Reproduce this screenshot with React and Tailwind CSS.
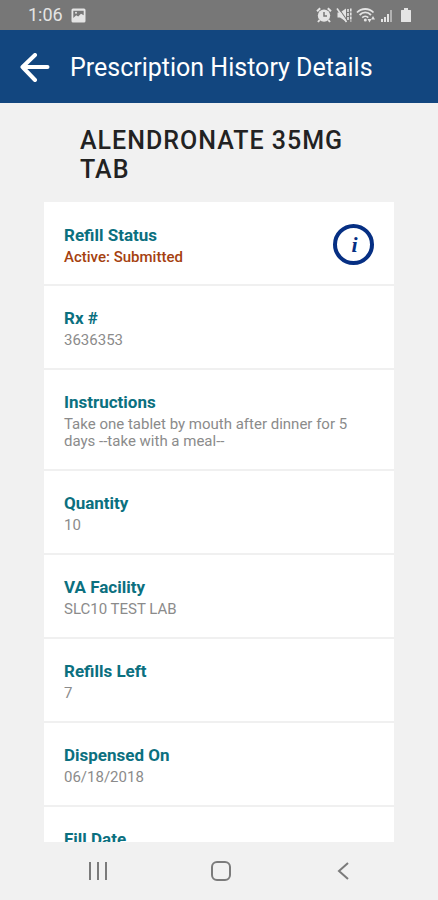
const details = [
  { label: "Rx #", value: "3636353" },
  {
    label: "Instructions",
    value: "Take one tablet by mouth after dinner for 5 days --take with a meal--",
  },
  { label: "Quantity", value: "10" },
  { label: "VA Facility", value: "SLC10 TEST LAB" },
  { label: "Refills Left", value: "7" },
  { label: "Dispensed On", value: "06/18/2018" },
];

function StatusBar() {
  return (
    <div className="flex h-[30px] shrink-0 items-center justify-between bg-[#777777] pl-7 pr-6 text-[#e4e4e4]">
      <div className="flex items-center gap-2">
        <span className="text-lg leading-[30px]">1:06</span>
        <svg className="size-[15px]" viewBox="0 0 15 15" aria-hidden="true">
          <rect x="0.5" y="0.5" width="14" height="14" rx="1.5" fill="currentColor" />
          <path d="M2.3 10V2.800h10.400v4.400L10 5.800 7.200 8.600 5.200 7.200z" fill="#777777" />
          <circle cx="5" cy="4.8" r="1" fill="currentColor" />
        </svg>
      </div>
      <div className="flex items-center gap-1">
        <svg className="size-4" viewBox="0 0 16 16" aria-hidden="true">
          <circle cx="8" cy="8.6" r="6.2" fill="currentColor" />
          <path d="M1 4.2 4.2 1.2M15 4.2 11.8 1.2M3.6 13 2 15M12.4 13 14 15" stroke="currentColor" strokeWidth="2" />
          <path d="M8 5v4h3" fill="none" stroke="#777777" strokeWidth="1.5" />
        </svg>
        <svg className="size-4" viewBox="0 0 16 16" aria-hidden="true">
          <path d="M1.500 5.500H4L10 1.500v13l-6-4H1.500z" fill="currentColor" />
          <path d="M2.500 1l9 13" stroke="#777777" strokeWidth="1.200" />
          <path d="M1 1.500l9.500 13.500" stroke="currentColor" strokeWidth="1.600" />
          <path d="M12 2v12M14.800 1.500v13" fill="none" stroke="currentColor" strokeWidth="1.600" strokeDasharray="3 1" />
        </svg>
        <svg className="h-4 w-5" viewBox="0 0 20 16" aria-hidden="true">
          <g fill="none" stroke="currentColor" strokeWidth="1.8">
            <path d="M1 5.500C5.500 0.800 13 0.800 17.500 5.500" />
            <path d="M3.600 8C7 4.600 11.600 4.600 15 8" />
            <path d="M6.200 10.600c1.800-1.700 4.400-1.700 6.100 0" />
          </g>
          <circle cx="9.300" cy="13" r="1.500" fill="currentColor" />
          <path d="M11.500 12h4l-2 3.500zM15 12.500h4L17 9z" fill="currentColor" />
        </svg>
        <svg className="h-4 w-[14px]" viewBox="0 0 14 16" fill="currentColor" aria-hidden="true">
          <path d="M1 12h2v3H1zM4 10h2v5H4zM7 7h2v8H7z" />
          <path d="M10 3h2v12h-2z" opacity="0.55" />
        </svg>
        <svg className="h-4 w-4" viewBox="0 0 16 16" fill="currentColor" aria-hidden="true">
          <path d="M6 1h4v2h2.500q.5 0 .5.500v11q0 .5-.5.500h-9q-.5 0-.5-.5v-11q0-.5.5-.5H6z" />
        </svg>
      </div>
    </div>
  );
}

function DetailRow({ label, value }) {
  return (
    <div className="border-b-2 border-[#f0f0f0] px-5 pt-5 pb-[19px]">
      <dt className="text-[17px] leading-6 font-bold text-[#0b707f]">{label}</dt>
      <dd className="pt-0.5 text-[15px] leading-[17px] text-[#8b8b8b]">{value}</dd>
    </div>
  );
}

export default function App() {
  return (
    <div className="flex h-screen flex-col bg-[#f1f1f1] font-[Roboto,sans-serif]">
      <StatusBar />
      <header className="flex h-[73px] shrink-0 items-center gap-5 bg-[#12467f] px-5 pt-[3px] text-white">
        <button type="button" aria-label="Back" className="h-[30px] w-[30px] shrink-0">
          <svg className="size-full" viewBox="0 0 30 30" fill="none" stroke="currentColor" strokeWidth="4" strokeLinecap="round" strokeLinejoin="round" aria-hidden="true">
            <path d="M27.500 14H2.500M15 2 2.500 14 15 27" />
          </svg>
        </button>
        <h1 className="text-[25px] leading-8">Prescription History Details</h1>
      </header>

      <main className="flex-1 overflow-hidden px-11">
        <h2 className="px-9 pt-[23px] pb-[18px] text-[25px] leading-[29px] font-medium tracking-[1px] text-[#222222]">
          ALENDRONATE 35MG TAB
        </h2>
        <dl className="bg-white">
          <div className="flex items-center justify-between border-b-2 border-[#f0f0f0] px-5 pt-[21px] pb-[18px]">
            <div>
              <dt className="text-[17px] leading-6 font-bold text-[#0b707f]">Refill Status</dt>
              <dd className="pt-0.5 text-[15px] leading-[17px] font-medium text-[#a5410f]">Active: Submitted</dd>
            </div>
            <dd className="flex">
              <button
                type="button"
                aria-label="Refill status information"
                className="flex size-[41px] items-center justify-center rounded-full border-4 border-[#062f83] pl-0.5 font-['Liberation_Serif',serif] text-[22px] leading-none font-bold text-[#062f83] italic"
              >
                i
              </button>
            </dd>
          </div>
          {details.map((d) => (
            <DetailRow key={d.label} label={d.label} value={d.value} />
          ))}
          <div className="px-5 pt-5 pb-[19px]">
            <dt className="text-[17px] leading-6 font-bold text-[#0b707f]">Fill Date</dt>
          </div>
        </dl>
      </main>

      <nav aria-label="System" className="flex h-[58px] shrink-0 items-center justify-between pr-[82px] pl-[86px] text-[#7b7b7b]">
        <button type="button" aria-label="Recent apps">
          <svg className="size-6" viewBox="0 0 24 24" stroke="currentColor" strokeWidth="2" aria-hidden="true">
            <path d="M4 3v18M12 3v18M20 3v18" />
          </svg>
        </button>
        <button type="button" aria-label="Home">
          <svg className="size-6" viewBox="0 0 24 24" fill="none" stroke="currentColor" strokeWidth="2" aria-hidden="true">
            <rect x="3" y="3" width="18" height="18" rx="5" />
          </svg>
        </button>
        <button type="button" aria-label="Go back">
          <svg className="size-6" viewBox="0 0 24 24" fill="none" stroke="currentColor" strokeWidth="2" aria-hidden="true">
            <path d="M16 4 7 12l9 8" />
          </svg>
        </button>
      </nav>
    </div>
  );
}
